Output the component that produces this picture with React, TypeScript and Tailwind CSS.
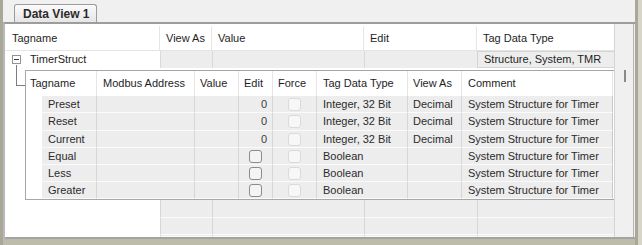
import React from "react";

interface SubTag {
  name: string;
  edit: string | null;
  type: string;
  viewAs: string;
}

const subTags: SubTag[] = [
  { name: "Preset", edit: "0", type: "Integer, 32 Bit", viewAs: "Decimal" },
  { name: "Reset", edit: "0", type: "Integer, 32 Bit", viewAs: "Decimal" },
  { name: "Current", edit: "0", type: "Integer, 32 Bit", viewAs: "Decimal" },
  { name: "Equal", edit: null, type: "Boolean", viewAs: "" },
  { name: "Less", edit: null, type: "Boolean", viewAs: "" },
  { name: "Greater", edit: null, type: "Boolean", viewAs: "" },
];

// row heights picked so the lines land where the screenshot has them
const rowHeights = ["h-[17px]", "h-[18px]", "h-[17px]", "h-[17px]", "h-[17px]", "h-[17px]"];

function EditBox() {
  return <div className="w-[13px] h-[13px] rounded-[3px] border border-[#8c8c8c] bg-[#f4f4f4]" />;
}

function ForceBox() {
  return <div className="w-[13px] h-[13px] rounded-[3px] border border-[#dadada] bg-[#f7f7f7]" />;
}

export default function App() {
  return (
    <div
      className="w-[642px] h-[245px] bg-[#f0f0f0] flex overflow-hidden text-[11px] text-[#1e1e1e]"
      style={{ fontFamily: '"Liberation Sans", Arial, sans-serif' }}
    >
      <div className="w-[3px] bg-[#a9a897]" />

      <div className="w-[632px] flex flex-col">
        {/* tab strip */}
        <div className="h-[22px] pt-[4px] pl-[11px] flex">
          <div className="w-[83px] h-[18px] rounded-t-[3px] border border-b-0 border-[#9c9c9c] bg-gradient-to-b from-[#fbfbfb] to-[#e6e6e6] pl-[8px] pt-[1px] font-bold text-[12px] text-[#2a2a2a] leading-[16px]">
            Data View 1
          </div>
        </div>

        {/* panel */}
        <div className="flex-1 flex flex-col border-t-2 border-t-[#9d9d9d] border-l-2 border-l-[#b9b9b9]">
          <div className="h-[213px] flex">
            {/* main grid */}
            <div className="w-[609px] flex flex-col bg-white">
              {/* header */}
              <div className="flex h-[27px] border-b border-[#e4e4e4] items-center pt-[2px]">
                <div className="w-[155px] h-full flex items-center pl-[7px] border-r border-[#e6e6e6]">Tagname</div>
                <div className="w-[52px] h-full flex items-center pl-[6px] border-r border-[#e6e6e6]">View As</div>
                <div className="w-[152px] h-full flex items-center pl-[6px] border-r border-[#e6e6e6]">Value</div>
                <div className="w-[113px] h-full flex items-center pl-[6px] border-r border-[#e6e6e6]">Edit</div>
                <div className="w-[137px] h-full flex items-center pl-[6px]">Tag Data Type</div>
              </div>

              {/* TimerStruct row */}
              <div className="flex h-[17px]">
                <div className="w-[155px] h-full flex items-center bg-white pl-[7px]">
                  <div className="w-[9px] h-[9px] border border-[#939393] bg-white flex items-center justify-center">
                    <div className="w-[5px] h-[1px] bg-[#3a3a3a]" />
                  </div>
                  <span className="pl-[9px]">TimerStruct</span>
                </div>
                <div className="w-[52px] h-full bg-[#ededed] border-l border-[#d9d9d9]" />
                <div className="w-[152px] h-full bg-[#ededed] border-l border-[#d9d9d9]" />
                <div className="w-[113px] h-full bg-[#ededed] border-l border-[#d9d9d9]" />
                <div className="w-[137px] h-full bg-[#ededed] border border-[#d4d4d4] border-r-0 flex items-center pl-[6px]">
                  Structure, System, TMR
                </div>
              </div>

              <div className="h-[2px]" />

              {/* nested grid with tree line */}
              <div className="flex h-[130px]">
                <div className="w-[20px] relative">
                  <div className="absolute left-[11px] top-[-5px] w-[1px] h-[20px] bg-[#7c7c7c]" />
                  <div className="absolute left-[11px] top-[15px] w-[9px] h-[1px] bg-[#7c7c7c]" />
                </div>
                <div className="w-[589px] border border-r-0 border-[#a7a7a7] flex flex-col">
                  <div className="flex h-[25px] bg-white">
                    <div className="w-[71px] flex items-center pl-[4px] border-r border-[#e6e6e6]">Tagname</div>
                    <div className="w-[98px] flex items-center pl-[6px] border-r border-[#e6e6e6]">Modbus Address</div>
                    <div className="w-[44px] flex items-center pl-[5px] border-r border-[#e6e6e6]">Value</div>
                    <div className="w-[34px] flex items-center pl-[5px] border-r border-[#e6e6e6]">Edit</div>
                    <div className="w-[44px] flex items-center pl-[5px] border-r border-[#e6e6e6]">Force</div>
                    <div className="w-[91px] flex items-center pl-[6px] border-r border-[#e6e6e6]">Tag Data Type</div>
                    <div className="w-[54px] flex items-center pl-[5px] border-r border-[#e6e6e6]">View As</div>
                    <div className="w-[151px] flex items-center pl-[6px] border-r border-[#e6e6e6]">Comment</div>
                  </div>
                  {subTags.map((tag, i) => (
                    <div key={tag.name} className={`flex ${rowHeights[i]} text-[#2b2b2b]`}>
                      <div className="w-[16px] bg-white" />
                      <div className="w-[55px] bg-[#ededed] border-b border-[#fafafa] border-r border-r-[#d6d6d6] flex items-center pl-[6px]">
                        {tag.name}
                      </div>
                      <div className="w-[98px] bg-[#ededed] border-b border-[#fafafa] border-r border-r-[#d6d6d6]" />
                      <div className="w-[44px] bg-[#ededed] border-b border-[#fafafa] border-r border-r-[#d6d6d6]" />
                      <div className="w-[34px] bg-[#ededed] border-b border-[#fafafa] border-r border-r-[#d6d6d6] flex items-center justify-end pr-[5px]">
                        {tag.edit !== null ? (
                          <span className="text-[#3c3c3c]">{tag.edit}</span>
                        ) : (
                          <div className="w-full flex justify-center pl-[5px]">
                            <EditBox />
                          </div>
                        )}
                      </div>
                      <div className="w-[44px] bg-[#ededed] border-b border-[#fafafa] border-r border-r-[#d6d6d6] flex items-center justify-center">
                        <ForceBox />
                      </div>
                      <div className="w-[91px] bg-[#ededed] border-b border-[#fafafa] border-r border-r-[#d6d6d6] flex items-center pl-[6px]">
                        {tag.type}
                      </div>
                      <div className="w-[54px] bg-[#ededed] border-b border-[#fafafa] border-r border-r-[#d6d6d6] flex items-center pl-[5px]">
                        {tag.viewAs}
                      </div>
                      <div className="w-[151px] bg-[#ededed] border-b border-[#fafafa] border-r border-r-[#c9c9c9] flex items-center pl-[6px]">
                        System Structure for Timer
                      </div>
                    </div>
                  ))}
                </div>
              </div>

              {/* empty rows below */}
              <div className="flex-1 flex flex-col">
                {["h-[18px]", "h-[17px]", "flex-1"].map((h) => (
                  <div key={h} className={`flex ${h}`}>
                    <div className="w-[155px] bg-white" />
                    <div className="w-[52px] bg-[#ededed] border-l border-[#d6d6d6] border-b border-b-[#fafafa]" />
                    <div className="w-[152px] bg-[#ededed] border-l border-[#d6d6d6] border-b border-b-[#fafafa]" />
                    <div className="w-[113px] bg-[#ededed] border-l border-[#d6d6d6] border-b border-b-[#fafafa]" />
                    <div className="w-[137px] bg-[#ededed] border-l border-[#d6d6d6] border-b border-b-[#fafafa]" />
                  </div>
                ))}
              </div>
            </div>

            {/* scroll strip */}
            <div className="w-[20px] bg-[#f0f0f0] border-l border-[#d4d4d4] border-r border-r-[#b4b4b4] relative">
              <div className="absolute left-[9px] top-[46px] w-[2px] h-[12px] bg-[#8a8a8a]" />
            </div>
          </div>
          <div className="h-[2px] bg-[#a3a3a3]" />
          <div className="flex-1 bg-[#bdbcab]" />
        </div>
      </div>

      <div className="w-[3px] bg-[#a9a897]" />
      <div className="w-[4px] bg-[#d6d5c8]" />
    </div>
  );
}
